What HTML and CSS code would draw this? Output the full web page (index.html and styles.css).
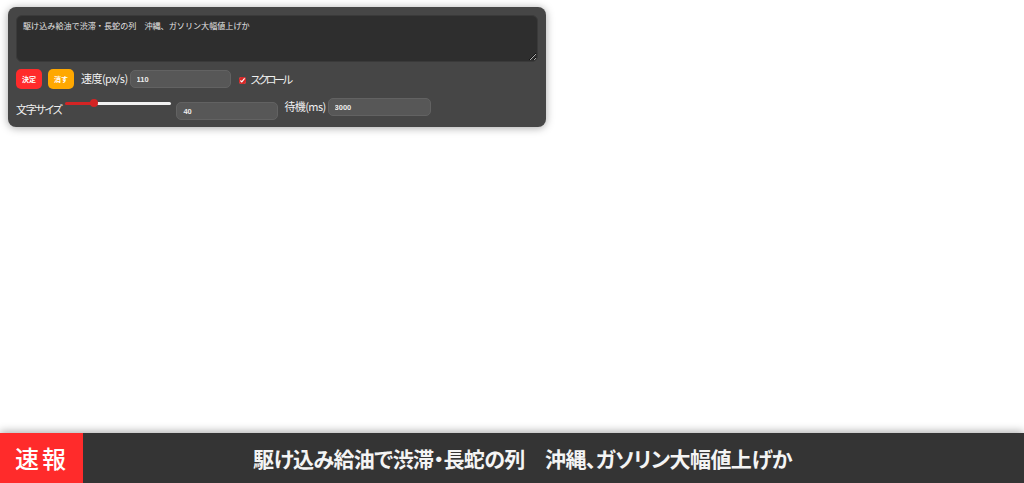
FILE: index.html
```html
<!DOCTYPE html>
<html lang="ja">
<head>
<meta charset="utf-8">
<title>速報テロップ</title>
<link rel="stylesheet" href="styles.css">
</head>
<body>
<div class="page">
  <div class="panel">
    <textarea class="msg">駆け込み給油で渋滞・長蛇の列　沖縄、ガソリン大幅値上げか</textarea>
    <div class="row row1">
      <button class="btn btn-ok">決定</button>
      <button class="btn btn-clear">消す</button>
      <span class="lbl lbl-speed">速度(px/s)</span>
      <input class="num num-speed" type="text" value="110">
      <input class="chk" type="checkbox" checked>
      <span class="lbl lbl-scroll">スクロール</span>
    </div>
    <div class="row row2">
      <span class="lbl lbl-size">文字サイズ</span>
      <input class="range" type="range" min="10" max="130" value="40">
      <input class="num num-size" type="text" value="40">
      <span class="lbl lbl-wait">待機(ms)</span>
      <input class="num num-wait" type="text" value="3000">
    </div>
  </div>
  <div class="ticker">
    <div class="tag">速報</div>
    <div class="news"><span class="news-text">駆け込み給油で渋滞・長蛇の列　沖縄、ガソリン大幅値上げか</span></div>
  </div>
</div>
</body>
</html>
```
FILE: styles.css
```css
* { box-sizing: border-box; }
html, body { margin: 0; padding: 0; }
body {
  background: #ffffff;
  font-family: "Noto Sans CJK JP", "Noto Sans", sans-serif;
  font-feature-settings: "palt";
  overflow: hidden;
}
.page {
  height: 483px;
  display: flex;
  flex-direction: column;
  align-items: flex-start;
}
.panel {
  margin: 7px 0 0 8px;
  width: 538px;
  padding: 8px 8px 7px 8px;
  background: #464646;
  border-radius: 8px;
  box-shadow: 0 1px 8px rgba(0,0,0,0.35);
}
.msg {
  display: block;
  width: 522px;
  height: 47px;
  margin: 0;
  padding: 4px 6px;
  background: #2e2e2e;
  border: 1px solid #3a3a3a;
  border-radius: 6px;
  color: #e6e6e6;
  font-family: inherit;
  font-feature-settings: normal;
  font-size: 8.1px;
  line-height: 12px;
  resize: vertical;
  outline: none;
}
.row {
  display: flex;
  align-items: flex-start;
}
.row1 { margin-top: 7px; height: 20px; }
.row2 { margin-top: 9px; height: 22px; }
.btn {
  width: 26px;
  height: 20px;
  padding: 0;
  border: none;
  border-radius: 5px;
  color: #fff;
  font-family: inherit;
  font-size: 7px;
  font-weight: 700;
  line-height: 20px;
}
.btn-ok { background: #ff2b2b; }
.btn-clear { background: #ffa800; margin-left: 6px; }
.lbl {
  color: #f0f0f0;
  font-size: 11px;
  letter-spacing: -0.3px;
  line-height: 16px;
  white-space: nowrap;
}
.lbl-speed { margin: 1px 0 0 7px; letter-spacing: -0.55px; }
.num {
  height: 18px;
  margin: 0;
  padding: 0 6px;
  background: #575757;
  border: 1px solid #626262;
  border-radius: 5px;
  color: #ececec;
  font-family: "Liberation Sans", sans-serif;
  font-size: 7.5px;
  font-weight: 700;
  outline: none;
}
.num-speed { width: 101px; margin: 1px 0 0 2px; }
.chk {
  width: 7px;
  height: 7px;
  margin: 8px 0 0 8px;
  accent-color: #d62828;
}
.lbl-scroll { margin: 2px 0 0 5px; letter-spacing: -2.3px; }
.lbl-size { margin-top: 3px; letter-spacing: -1.3px; }
.range {
  -webkit-appearance: none;
  appearance: none;
  width: 106px;
  height: 8px;
  margin: 1px 0 0 4px;
  padding: 0;
  background: transparent;
}
.range::-webkit-slider-runnable-track {
  height: 3px;
  border-radius: 2px;
  background: linear-gradient(to right, #d42424 0 25%, #f2f2f2 25% 100%);
}
.range::-webkit-slider-thumb {
  -webkit-appearance: none;
  appearance: none;
  width: 8px;
  height: 8px;
  margin-top: -2.5px;
  border-radius: 50%;
  background: #d42424;
  border: none;
}
.num-size { width: 102px; margin: 4px 0 0 5px; }
.lbl-wait { margin: 0 0 0 6px; letter-spacing: -0.6px; }
.num-wait { width: 103px; margin: 0 0 0 2px; }
.ticker {
  margin-top: auto;
  width: 1024px;
  height: 50px;
  display: flex;
  background: #343434;
  box-shadow: 0 -2px 8px rgba(0,0,0,0.3);
}
.tag {
  width: 83px;
  flex: none;
  background: #ff2b2b;
  color: #fff;
  font-size: 24px;
  font-weight: 500;
  letter-spacing: 3px;
  line-height: 50px;
  padding-left: 15px;
}
.news {
  flex: 1;
  color: #f4f4f4;
  font-size: 21px;
  font-weight: 700;
  letter-spacing: -0.6px;
  line-height: 50px;
  padding-left: 170px;
  white-space: nowrap;
  overflow: hidden;
}
```
